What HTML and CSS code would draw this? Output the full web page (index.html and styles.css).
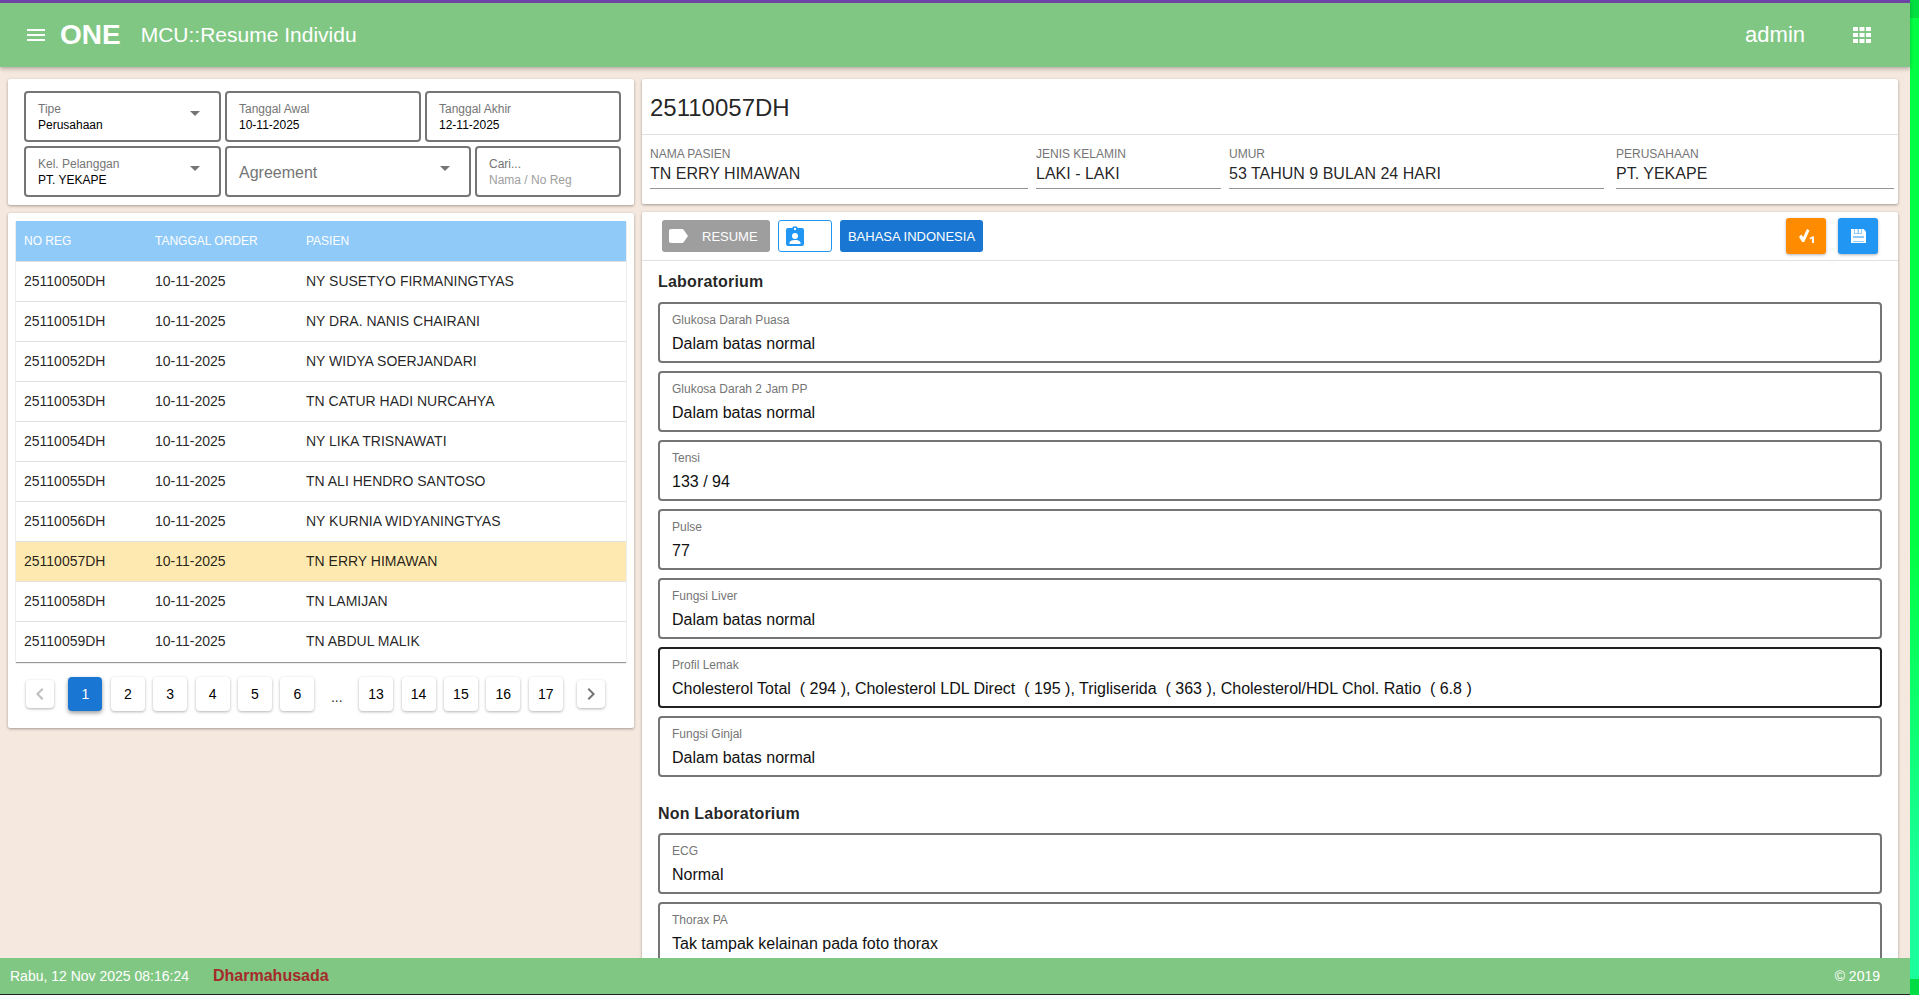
FILE: index.html
```html
<!DOCTYPE html>
<html lang="en">
<head>
    <meta charset="UTF-8">
    <title>MCU::Resume Individu</title>
    <link rel="stylesheet" href="styles.css">
</head>
<body>
    <div class="app">
        <header class="topbar">
            <svg class="menu-icon" viewBox="0 0 24 24"><path d="M3 6h18v2H3V6m0 5h18v2H3v-2m0 5h18v2H3v-2z"/></svg>
            <span class="brand">ONE</span>
            <span class="page-title">MCU::Resume Individu</span>
            <span class="user">admin</span>
            <svg class="apps-icon" viewBox="0 0 18 16"><path d="M0 0h5v4H0zM6.500 0h5v4h-5zM13 0h5v4h-5zM0 6h5v4H0zM6.500 6h5v4h-5zM13 6h5v4h-5zM0 12h5v4H0zM6.500 12h5v4h-5zM13 12h5v4h-5z"/></svg>
        </header>

        <main class="content">
            <div class="left-col">
                <div class="card filters">
                    <div class="filter-row">
                        <div class="field w-197">
                            <label>Tipe</label>
                            <div>Perusahaan</div>
                            <i class="caret"></i>
                        </div>
                        <div class="field w-196">
                            <label>Tanggal Awal</label>
                            <div>10-11-2025</div>
                        </div>
                        <div class="field grow">
                            <label>Tanggal Akhir</label>
                            <div>12-11-2025</div>
                        </div>
                    </div>
                    <div class="filter-row">
                        <div class="field w-197">
                            <label>Kel. Pelanggan</label>
                            <div>PT. YEKAPE</div>
                            <i class="caret"></i>
                        </div>
                        <div class="field w-246">
                            <div class="big-label">Agreement</div>
                            <i class="caret"></i>
                        </div>
                        <div class="field grow">
                            <label>Cari...</label>
                            <div class="placeholder">Nama / No Reg</div>
                        </div>
                    </div>
                </div>

                <div class="card list-card">
                    <table class="reg-table">
                        <thead>
                            <tr><th class="col-reg">NO REG</th><th class="col-date">TANGGAL ORDER</th><th>PASIEN</th></tr>
                        </thead>
                        <tbody>
                            <tr><td>25110050DH</td><td>10-11-2025</td><td>NY SUSETYO FIRMANINGTYAS</td></tr>
                            <tr><td>25110051DH</td><td>10-11-2025</td><td>NY DRA. NANIS CHAIRANI</td></tr>
                            <tr><td>25110052DH</td><td>10-11-2025</td><td>NY WIDYA SOERJANDARI</td></tr>
                            <tr><td>25110053DH</td><td>10-11-2025</td><td>TN CATUR HADI NURCAHYA</td></tr>
                            <tr><td>25110054DH</td><td>10-11-2025</td><td>NY LIKA TRISNAWATI</td></tr>
                            <tr><td>25110055DH</td><td>10-11-2025</td><td>TN ALI HENDRO SANTOSO</td></tr>
                            <tr><td>25110056DH</td><td>10-11-2025</td><td>NY KURNIA WIDYANINGTYAS</td></tr>
                            <tr class="selected"><td>25110057DH</td><td>10-11-2025</td><td>TN ERRY HIMAWAN</td></tr>
                            <tr><td>25110058DH</td><td>10-11-2025</td><td>TN LAMIJAN</td></tr>
                            <tr><td>25110059DH</td><td>10-11-2025</td><td>TN ABDUL MALIK</td></tr>
                        </tbody>
                    </table>
                    <nav class="pager">
                        <button class="nav-btn disabled"><svg viewBox="0 0 24 24"><path d="M15.410 16.580 10.830 12l4.580-4.590L14 6l-6 6 6 6z"/></svg></button>
                        <button class="active">1</button>
                        <button>2</button>
                        <button>3</button>
                        <button>4</button>
                        <button>5</button>
                        <button>6</button>
                        <span class="dots">...</span>
                        <button>13</button>
                        <button>14</button>
                        <button>15</button>
                        <button>16</button>
                        <button>17</button>
                        <button class="nav-btn"><svg viewBox="0 0 24 24"><path d="M8.590 16.580 13.170 12 8.590 7.410 10 6l6 6-6 6z"/></svg></button>
                    </nav>
                </div>
            </div>

            <div class="right-col">
                <div class="card patient">
                    <h2 class="reg-no">25110057DH</h2>
                    <div class="patient-fields">
                        <div class="info w-nama"><label>NAMA PASIEN</label><div>TN ERRY HIMAWAN</div></div>
                        <div class="info w-jk"><label>JENIS KELAMIN</label><div>LAKI - LAKI</div></div>
                        <div class="info w-umur"><label>UMUR</label><div>53 TAHUN 9 BULAN 24 HARI</div></div>
                        <div class="info grow"><label>PERUSAHAAN</label><div>PT. YEKAPE</div></div>
                    </div>
                </div>

                <div class="card resume">
                    <div class="toolbar">
                        <button class="btn btn-grey">
                            <svg viewBox="0 0 24 24"><path d="M17.630 5.840C17.270 5.330 16.670 5 16 5L5 5.010C3.900 5.010 3 5.900 3 7v10c0 1.100.9 1.990 2 1.990L16 19c.67 0 1.270-.33 1.630-.84L22 12l-4.370-6.160z"/></svg>
                            RESUME
                        </button>
                        <button class="btn btn-outline">
                            <svg viewBox="0 0 18 20"><path fill-rule="evenodd" d="M2 2h4.500V1.500a1 1 0 0 1 1-1h3a1 1 0 0 1 1 1V2H16a2 2 0 0 1 2 2v14a2 2 0 0 1-2 2H2a2 2 0 0 1-2-2V4a2 2 0 0 1 2-2zM8 2v2h2V2zM9 7a3 3 0 1 0 0 6 3 3 0 0 0 0-6zM3.500 18h11v-1.500c0-1.700-3.500-2.500-5.500-2.500s-5.500.8-5.500 2.500z"/></svg>
                        </button>
                        <button class="btn btn-blue">BAHASA INDONESIA</button>
                        <span class="spacer"></span>
                        <button class="square-btn btn-orange">
                            <svg class="check-one" viewBox="0 0 15 14"><path d="M0 8 2.200 5.500 4.200 8 8 0l2.500 1.500L5.200 13H3.200z"/><path d="M10.800 9 13 7.500h2V14h-2V9.500l-2.200 1z"/></svg>
                        </button>
                        <button class="square-btn btn-save">
                            <svg class="save-icon" viewBox="0 0 15 14"><path d="M0 0h12.500L15 2.500V14H0z" fill="#fff"/><path d="M3 0h8v5H3z" fill="#90caf9"/><path d="M4 0h2.500v4H4zM8 0h2v4H8z" fill="#fff"/><path d="M2 7h11v6H2z" fill="#90caf9"/><path d="M2 9h11v3H2z" fill="#fff"/></svg>
                        </button>
                    </div>

                    <div class="resume-body">
                        <h3>Laboratorium</h3>
                        <div class="result"><label>Glukosa Darah Puasa</label><div>Dalam batas normal</div></div>
                        <div class="result"><label>Glukosa Darah 2 Jam PP</label><div>Dalam batas normal</div></div>
                        <div class="result"><label>Tensi</label><div>133 / 94</div></div>
                        <div class="result"><label>Pulse</label><div>77</div></div>
                        <div class="result"><label>Fungsi Liver</label><div>Dalam batas normal</div></div>
                        <div class="result abnormal"><label>Profil Lemak</label><div>Cholesterol Total &nbsp;( 294 ), Cholesterol LDL Direct &nbsp;( 195 ), Trigliserida &nbsp;( 363 ), Cholesterol/HDL Chol. Ratio &nbsp;( 6.8 )</div></div>
                        <div class="result"><label>Fungsi Ginjal</label><div>Dalam batas normal</div></div>

                        <h3 class="non-lab">Non Laboratorium</h3>
                        <div class="result"><label>ECG</label><div>Normal</div></div>
                        <div class="result"><label>Thorax PA</label><div>Tak tampak kelainan pada foto thorax</div></div>
                    </div>
                </div>
            </div>
        </main>

        <footer class="footer">
            <span class="clock">Rabu, 12 Nov 2025 08:16:24</span>
            <span class="company">Dharmahusada</span>
            <span class="copy">© 2019</span>
        </footer>
    </div>
    <div class="rail"></div>
</body>
</html>
```

FILE: styles.css
```css
html, body {
    margin: 0;
    height: 995px;
    overflow: hidden;
}
body {
    display: flex;
    font-family: "Liberation Sans", Arial, sans-serif;
    font-size: 14px;
    color: rgba(0, 0, 0, 0.87);
    background-color: #f5e8df;
}
label {
    display: block;
}
button {
    font-family: inherit;
    border: none;
    cursor: pointer;
}
.app {
    flex: 1;
    min-width: 0;
    height: 994px;
    display: flex;
    flex-direction: column;
    border-bottom: 1px solid #222;
}
.rail {
    width: 9px;
    height: 995px;
    background: linear-gradient(#00ff44, #00ff44 55%, #1aff9c 90%);
    border-top: 18px solid #00e040;
    border-bottom: 16px solid #00dd44;
    box-sizing: border-box;
}

/* top bar */
.topbar {
    height: 64px;
    flex-shrink: 0;
    display: flex;
    align-items: center;
    border-top: 3px solid #6f42a6;
    background-color: #81c784;
    color: #fff;
    box-shadow: 0 2px 4px rgba(0, 0, 0, 0.25);
    position: relative;
    z-index: 2;
}
.menu-icon {
    width: 24px;
    height: 24px;
    margin-left: 24px;
    fill: #fff;
}
.brand {
    font-size: 28px;
    font-weight: 700;
    margin-left: 12px;
}
.page-title {
    font-size: 21px;
    margin-left: 20px;
}
.user {
    font-size: 22px;
    margin-left: auto;
}
.apps-icon {
    width: 18px;
    height: 16px;
    margin: 0 39px 0 48px;
    fill: #fff;
}

/* page body */
.content {
    flex: 1;
    min-height: 0;
    overflow: hidden;
    display: flex;
    gap: 8px;
    padding: 12px 12px 0 8px;
}
.card {
    background-color: #fff;
    border-radius: 2px;
    box-shadow: 0 1px 3px rgba(0, 0, 0, 0.35);
}
.left-col {
    width: 626px;
    flex-shrink: 0;
}
.right-col {
    flex: 1;
    min-width: 0;
}
.grow {
    flex: 1;
}

/* filters */
.filters {
    height: 126px;
    box-sizing: border-box;
    padding: 12px 13px 0 16px;
}
.filter-row {
    display: flex;
    gap: 4px;
    margin-bottom: 4px;
}
.field {
    position: relative;
    box-sizing: border-box;
    height: 51px;
    padding: 8px 12px;
    border: 2px solid #757575;
    border-radius: 4px;
    font-size: 12px;
    line-height: 16px;
    color: #000;
}
.field label {
    color: #757575;
}
.w-197 { width: 197px; }
.w-196 { width: 196px; }
.w-246 { width: 246px; }
.big-label {
    font-size: 16px;
    line-height: 33px;
    color: #757575;
}
.placeholder {
    color: #9e9e9e;
}
.caret {
    position: absolute;
    right: 19px;
    top: 18px;
    border-top: 5px solid #757575;
    border-left: 5px solid transparent;
    border-right: 5px solid transparent;
}

/* list */
.list-card {
    margin-top: 8px;
    height: 515px;
    padding: 8px;
    box-sizing: border-box;
}
.reg-table {
    width: 100%;
    border-collapse: collapse;
    box-shadow: 0 1px 1px rgba(0, 0, 0, 0.4);
}
.reg-table th {
    height: 40px;
    padding: 0 8px;
    background-color: #90caf9;
    color: #fff;
    font-size: 12px;
    font-weight: 400;
    text-align: left;
}
.reg-table td {
    height: 40px;
    padding: 0 8px 1px;
    font-size: 14px;
    border-top: 1px solid #e0e0e0;
    box-sizing: border-box;
}
.col-reg { width: 115px; }
.col-date { width: 135px; }
.selected {
    background-color: #feeab0;
}
.pager {
    display: flex;
    align-items: center;
    gap: 8.4px;
    margin: 15px 0 0 10px;
}
.pager button {
    width: 34px;
    height: 34px;
    padding: 0;
    background-color: #fff;
    color: #000;
    font-size: 14px;
    border-radius: 4px;
    box-shadow: 0 1px 3px rgba(0, 0, 0, 0.3);
}
.pager .active {
    background-color: #1976d2;
    color: #fff;
    box-shadow: 0 2px 4px rgba(0, 0, 0, 0.4);
}
.pager .nav-btn {
    width: 28px;
    height: 28px;
    display: flex;
    align-items: center;
    justify-content: center;
}
.nav-btn svg {
    width: 24px;
    height: 24px;
    fill: #757575;
}
.nav-btn.disabled svg {
    fill: #bdbdbd;
}
.nav-btn.disabled {
    margin-right: 6px;
}
.pager .nav-btn:last-child {
    margin-left: 6px;
}
.dots {
    width: 28px;
    text-align: center;
    font-size: 14px;
    padding-top: 6px;
}

/* patient header */
.patient {
    height: 125px;
}
.reg-no {
    margin: 0;
    height: 56px;
    box-sizing: border-box;
    padding-left: 8px;
    font-size: 24px;
    font-weight: 400;
    line-height: 58px;
    border-bottom: 1px solid #e0e0e0;
}
.patient-fields {
    display: flex;
    gap: 8px;
    padding: 11px 4px 0 8px;
}
.info {
    box-sizing: border-box;
    height: 43px;
    border-bottom: 1px solid #949494;
    font-size: 16px;
    line-height: 24px;
}
.info label {
    font-size: 12px;
    line-height: 16px;
    color: #757575;
}
.w-nama { width: 378px; }
.w-jk { width: 185px; }
.w-umur { width: 375px; margin-right: 4px; }

/* resume */
.resume {
    margin-top: 8px;
    height: 760px;
}
.toolbar {
    height: 48px;
    display: flex;
    align-items: center;
    gap: 8px;
    padding: 0 20px;
    border-bottom: 1px solid #e0e0e0;
}
.btn {
    height: 32px;
    padding: 0;
    border-radius: 3px;
    display: flex;
    align-items: center;
    font-size: 13px;
    color: #fff;
}
.btn svg {
    width: 24px;
    height: 24px;
    fill: #fff;
}
.btn-grey {
    width: 108px;
    background-color: #9e9e9e;
    padding-left: 4px;
    gap: 12px;
}
.btn-outline {
    width: 54px;
    background-color: #fff;
    border: 1px solid #2196f3;
    padding-left: 7px;
    box-sizing: border-box;
}
.btn-outline svg {
    width: 18px;
    height: 20px;
    fill: #2196f3;
}
.btn-blue {
    width: 143px;
    background-color: #1976d2;
    justify-content: center;
}
.spacer {
    flex: 1;
}
.square-btn {
    width: 40px;
    height: 36px;
    padding: 0;
    border-radius: 3px;
    margin-left: 4px;
    display: flex;
    align-items: center;
    justify-content: center;
    box-shadow: 0 1px 3px rgba(0, 0, 0, 0.3);
}
.square-btn svg {
    width: 15px;
    height: 14px;
    fill: #fff;
}
.btn-orange {
    background-color: #ff8c00;
}
.btn-save {
    background-color: #2196f3;
}
.resume-body {
    padding: 0 16px;
}
.resume-body h3 {
    margin: 0;
    padding: 11px 0 10px;
    font-size: 16px;
    line-height: 20px;
    font-weight: 700;
    letter-spacing: 0.2px;
}
.resume-body .non-lab {
    padding: 19px 0 9px;
}
.result {
    box-sizing: border-box;
    height: 61px;
    margin-bottom: 8px;
    padding: 8px 12px 0;
    border: 2px solid #757575;
    border-radius: 4px;
    font-size: 16px;
    line-height: 24px;
    color: #111;
}
.result label {
    font-size: 12px;
    line-height: 16px;
    margin-bottom: 4px;
    color: #757575;
}
.abnormal {
    border-color: #212121;
}

/* footer */
.footer {
    height: 36px;
    flex-shrink: 0;
    display: flex;
    align-items: center;
    padding: 0 30px 0 10px;
    background-color: #81c784;
    color: #fff;
    font-size: 14px;
    position: relative;
    z-index: 2;
}
.company {
    margin-left: 24px;
    font-size: 16px;
    font-weight: 700;
    color: #a52a2a;
}
.copy {
    margin-left: auto;
}
```
